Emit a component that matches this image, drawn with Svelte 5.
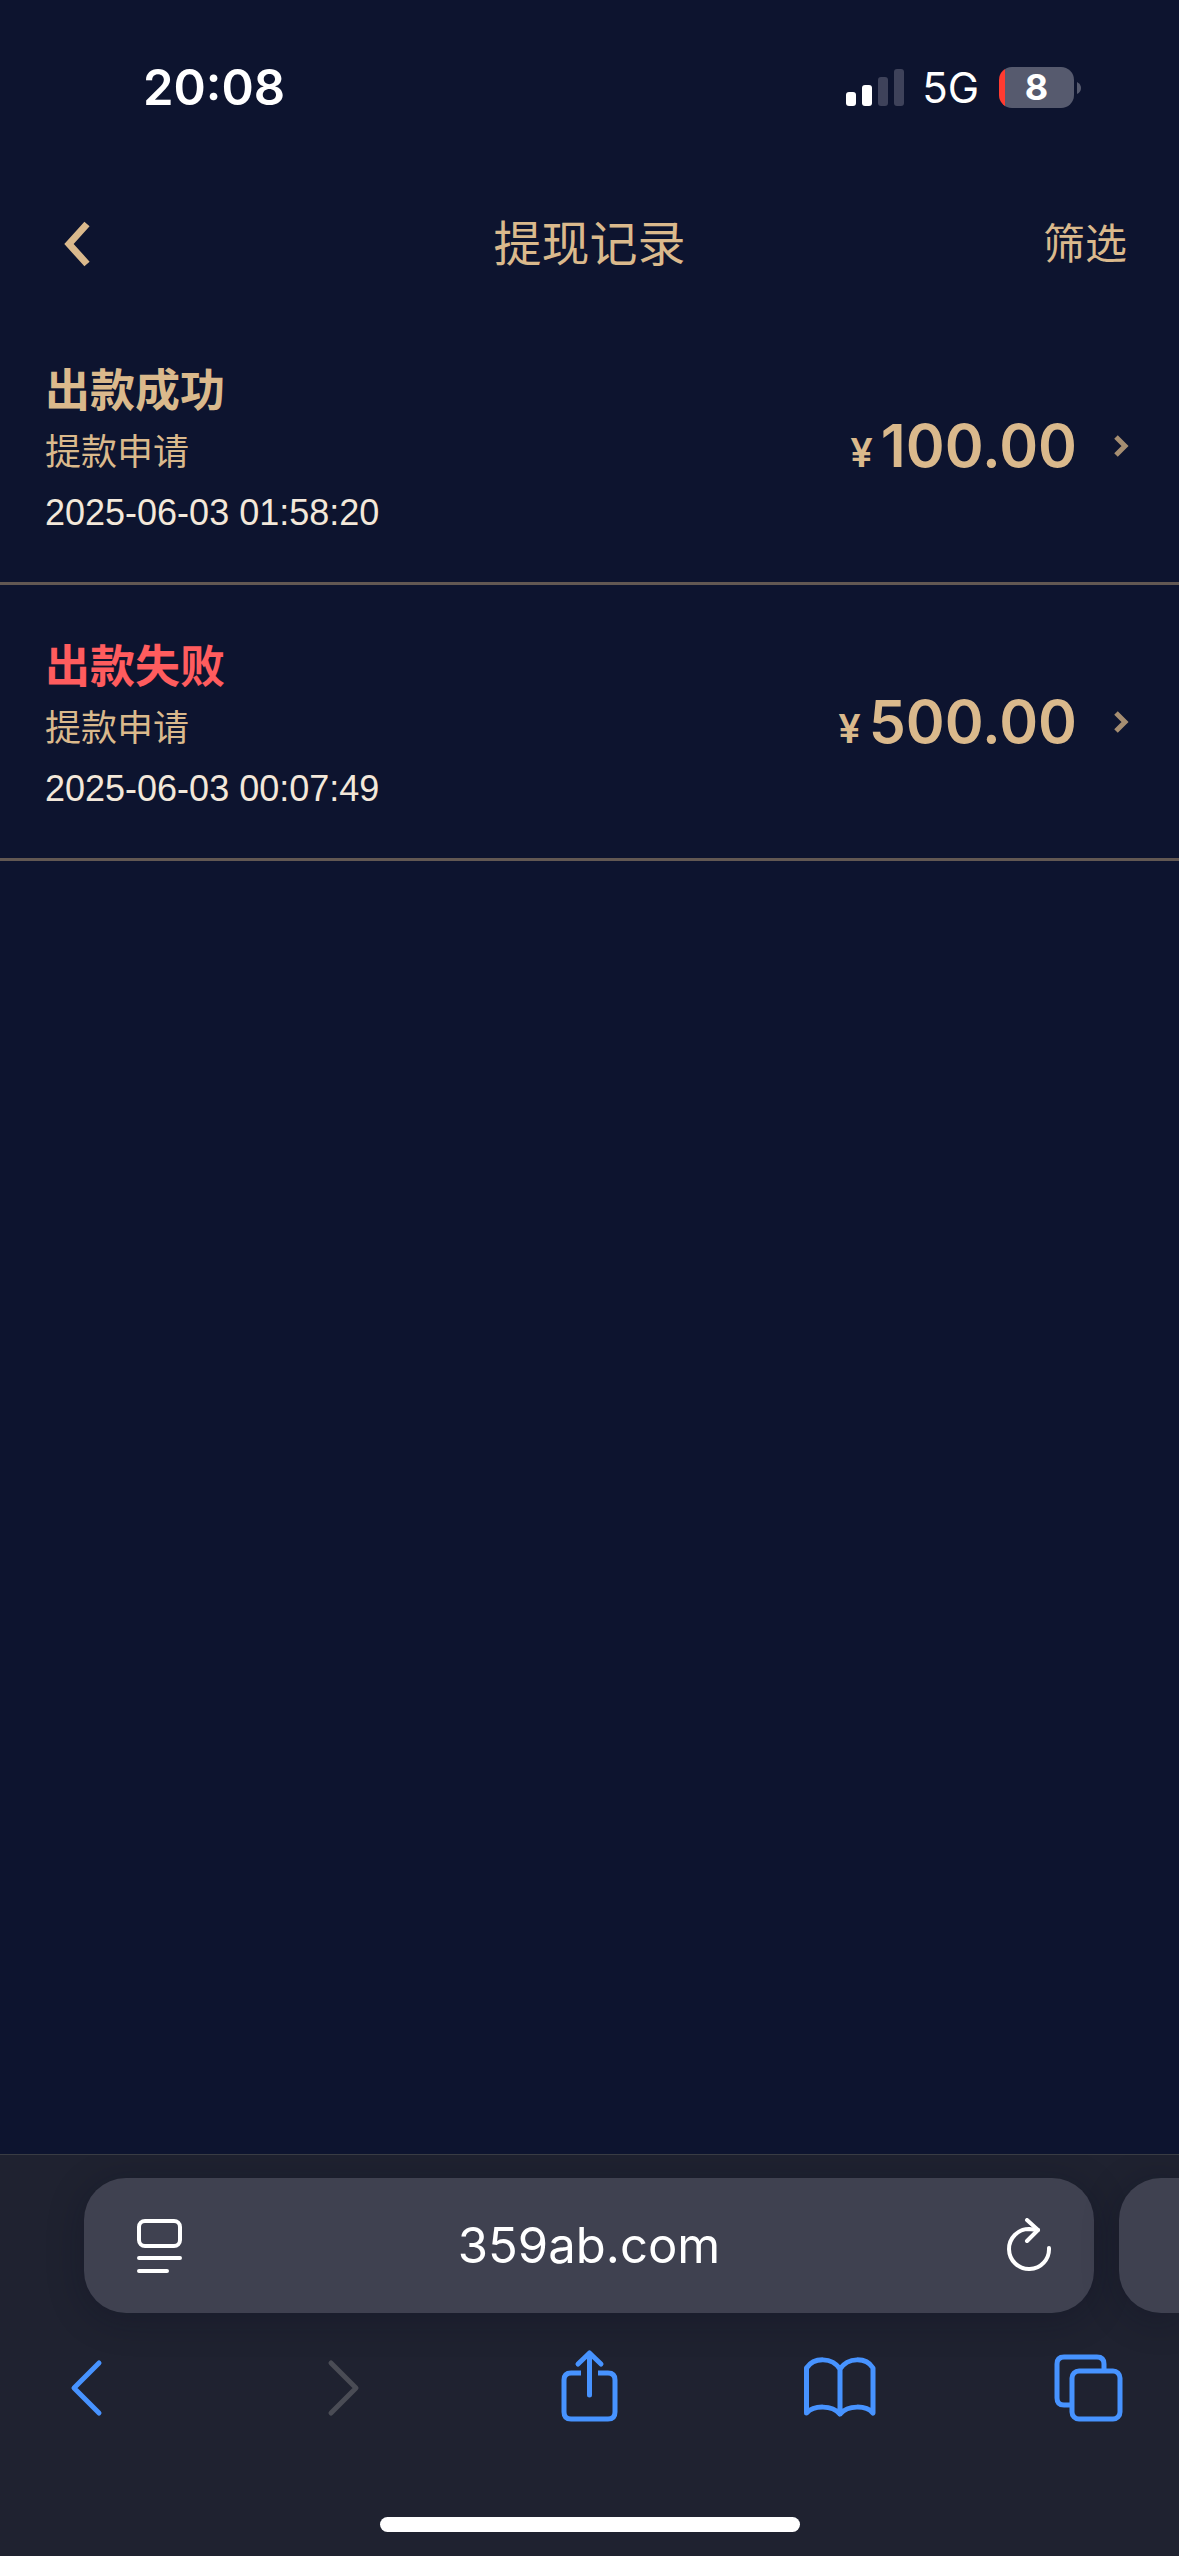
<script>
  const gold = '#dab98c';

  const records = [
    { status: '出款成功', failed: false, type: '提款申请', time: '2025-06-03 01:58:20', amount: '100.00' },
    { status: '出款失败', failed: true, type: '提款申请', time: '2025-06-03 00:07:49', amount: '500.00' }
  ];

  const signal = [
    { height: 14, on: true },
    { height: 21, on: true },
    { height: 29, on: false },
    { height: 37, on: false }
  ];

  const battery = 8;
</script>

<div class="screen">
  <div class="status">
    <time>20:08</time>
    <div class="indicators">
      <div class="signal">
        {#each signal as bar}
          <i class:on={bar.on} style:height={`${bar.height}px`}></i>
        {/each}
      </div>
      <span class="network">5G</span>
      <div class="battery">
        <span class="cell" style:--level={`${battery}%`}>{battery}</span>
        <svg width="4" height="12" viewBox="0 0 4 12"><path d="M0 0Q4 2 4 6T0 12Z" fill="#565a6e" /></svg>
      </div>
    </div>
  </div>

  <header>
    <button class="back" aria-label="返回">
      <svg width="28" height="48" viewBox="0 0 28 48" fill="none" stroke={gold} stroke-width="7">
        <path d="M25 4L7 24L25 44" />
      </svg>
    </button>
    <h1>提现记录</h1>
    <button class="filter">筛选</button>
  </header>

  <main>
    <ul>
      {#each records as record}
        <li>
          <a href="#detail">
            <div class="info">
              <strong class:failed={record.failed}>{record.status}</strong>
              <span>{record.type}</span>
              <time>{record.time}</time>
            </div>
            <p class="amount"><small>¥</small>{record.amount}</p>
            <svg width="16" height="24" viewBox="0 0 16 24" fill="none" stroke="#a68e71" stroke-width="5">
              <path d="M3 3L12 12L3 21" />
            </svg>
          </a>
        </li>
      {/each}
    </ul>
  </main>

  <footer>
    <div class="tabs">
      <div class="address">
        <button aria-label="阅读器">
          <svg width="56" height="56" viewBox="-10 0 56 56">
            <rect x="3" y="3" width="41" height="25" rx="6" />
            <path d="M3 40H44M3 53H31" />
          </svg>
        </button>
        <a href="#top">359ab.com</a>
        <button aria-label="刷新">
          <svg width="56" height="56" viewBox="0 0 56 56">
            <path d="M53 30A20 20 0 1 1 33 11L42 12" />
            <path d="M31 2L42 12L31 23" />
          </svg>
        </button>
      </div>
      <div class="next-tab"></div>
    </div>

    <nav>
      <button aria-label="后退">
        <svg width="80" height="80" viewBox="0 0 80 80">
          <path d="M52 15L27 40L52 65" />
        </svg>
      </button>
      <button aria-label="前进" disabled>
        <svg width="80" height="80" viewBox="0 0 80 80">
          <path d="M33 15L58 40L33 65" />
        </svg>
      </button>
      <button aria-label="分享">
        <svg width="80" height="80" viewBox="0 0 80 80">
          <path d="M31 25H21Q14 25 14 32V64Q14 71 21 71H58Q65 71 65 64V32Q65 25 58 25H48" stroke-linecap="butt" />
          <path d="M39.500 47V5M28 16L39.500 5L51 16" />
        </svg>
      </button>
      <button aria-label="书签">
        <svg width="80" height="80" viewBox="0 0 80 80">
          <path d="M39 21C31 9 13 9 5.500 20V65C13 57 31 57 39 66C47 57 65 57 72 65V20C65 9 47 9 39 21V66" />
        </svg>
      </button>
      <button aria-label="标签页">
        <svg width="80" height="80" viewBox="0 0 80 80">
          <path d="M20 57H12Q5 57 5 50V16Q5 9 12 9H45Q52 9 52 16V23" stroke-linecap="butt" />
          <rect x="20" y="23" width="48" height="48" rx="7" />
        </svg>
      </button>
    </nav>
    <div class="home"></div>
  </footer>
</div>

<style>
  :global(body) {
    margin: 0;
    background: #0d142f;
  }

  .screen {
    min-height: 100vh;
    display: flex;
    flex-direction: column;
    color: #dab98c;
    font-family: Inter, "Noto Sans CJK SC", sans-serif;
  }

  button {
    padding: 0;
    border: 0;
    background: none;
    color: inherit;
    font: inherit;
  }

  a {
    color: inherit;
    text-decoration: none;
  }

  svg {
    display: block;
    flex: none;
  }

  .status {
    height: 175px;
    box-sizing: border-box;
    padding: 0 98px 0 143px;
    display: flex;
    justify-content: space-between;
    align-items: center;
    color: #fff;
  }

  .status time {
    font-size: 49px;
    font-weight: 600;
  }

  .indicators {
    display: flex;
    align-items: center;
  }

  .signal {
    display: flex;
    align-items: flex-end;
    gap: 6px;
  }

  .signal i {
    width: 10px;
    border-radius: 3px;
    background: #3e425a;
  }

  .signal i.on { background: #fff; }

  .network {
    margin: 0 20px 0 18px;
    font-size: 42px;
    font-weight: 400;
  }

  .battery {
    display: flex;
    align-items: center;
    gap: 3px;
  }

  .cell {
    width: 75px;
    border-radius: 13px;
    background: linear-gradient(to right, #ff3b30 var(--level), #565a6e var(--level));
    text-align: center;
    line-height: 41px;
    font-size: 36px;
    font-weight: 700;
  }

  header {
    height: 134px;
    box-sizing: border-box;
    padding: 4px 52px 0;
    display: grid;
    grid-template-columns: 1fr auto 1fr;
    align-items: center;
  }

  .back {
    justify-self: start;
    padding-left: 10px;
  }

  h1 {
    margin: 0;
    font-size: 48px;
    line-height: 48px;
    font-weight: 400;
  }

  .filter {
    justify-self: end;
    font-size: 42px;
    line-height: 48px;
  }

  main { flex: 1; }

  ul {
    margin: 0;
    padding: 0;
    list-style: none;
  }

  li { border-bottom: 3px solid #625853; }

  li a {
    padding: 0 50px 0 45px;
    display: flex;
    align-items: center;
  }

  .info {
    flex: 1;
    padding: 52px 0 39px;
    display: flex;
    flex-direction: column;
    font-size: 36px;
    line-height: 60px;
    font-family: "Liberation Sans", "Noto Sans CJK SC", sans-serif;
  }

  .info strong {
    font-size: 45px;
    line-height: 62px;
  }

  .info strong.failed { color: #ff5c5e; }

  .info time { color: #f3e8da; }

  .amount {
    margin: 0 36px 0 0;
    font-size: 59px;
    font-weight: 600;
  }

  .amount small {
    margin-right: 8px;
    font-size: 40px;
  }

  footer {
    border-top: 1px solid #393c43;
    background: #1f2230;
    color: #fff;
    overflow: hidden;
  }

  footer svg {
    fill: none;
    stroke: currentColor;
    stroke-width: 4;
    stroke-linecap: round;
    stroke-linejoin: round;
  }

  .tabs {
    padding: 23px 0 0 84px;
    display: flex;
    gap: 25px;
  }

  .address, .next-tab {
    height: 135px;
    background: #3f4150;
    box-shadow: 0 6px 36px rgba(10, 14, 30, 0.3);
  }

  .address {
    flex: 1;
    box-sizing: border-box;
    padding: 0 42px;
    display: flex;
    align-items: center;
    justify-content: space-between;
    border-radius: 42px;
    font-size: 49px;
  }

  .next-tab {
    width: 60px;
    border-radius: 42px 0 0 42px;
  }

  nav {
    padding: 35px 47px 0;
    display: flex;
    justify-content: space-between;
    color: #4793ff;
  }

  nav svg { stroke-width: 5; }

  nav button:disabled { color: #4a4c55; }

  .home {
    width: 420px;
    height: 15px;
    margin: 89px auto 24px;
    border-radius: 8px;
    background: #fff;
  }
</style>
